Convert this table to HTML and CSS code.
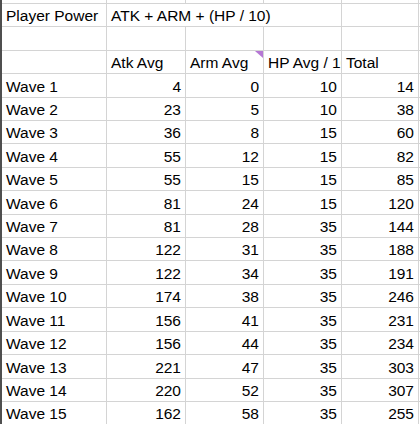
FILE: index.html
```html
<!DOCTYPE html>
<html>
<head>
<meta charset="utf-8">
<link rel="stylesheet" href="styles.css">
</head>
<body>
<div class="sheet">
  <div class="c"></div><div class="c"></div><div class="c"></div><div class="c"></div><div class="c"></div><div class="c"></div>

  <div class="c t">Player Power</div><div class="c t span3">ATK + ARM + (HP / 10)</div><div class="c"></div><div class="c"></div>

  <div class="c"></div><div class="c"></div><div class="c"></div><div class="c"></div><div class="c"></div><div class="c"></div>

  <div class="c"></div><div class="c t">Atk Avg</div><div class="c t note">Arm Avg<span class="tri"></span></div><div class="c t">HP Avg / 10</div><div class="c t">Total</div><div class="c"></div>

  <div class="c t">Wave 1</div><div class="c n">4</div><div class="c n">0</div><div class="c n">10</div><div class="c n">14</div><div class="c"></div>
  <div class="c t">Wave 2</div><div class="c n">23</div><div class="c n">5</div><div class="c n">10</div><div class="c n">38</div><div class="c"></div>
  <div class="c t">Wave 3</div><div class="c n">36</div><div class="c n">8</div><div class="c n">15</div><div class="c n">60</div><div class="c"></div>
  <div class="c t">Wave 4</div><div class="c n">55</div><div class="c n">12</div><div class="c n">15</div><div class="c n">82</div><div class="c"></div>
  <div class="c t">Wave 5</div><div class="c n">55</div><div class="c n">15</div><div class="c n">15</div><div class="c n">85</div><div class="c"></div>
  <div class="c t">Wave 6</div><div class="c n">81</div><div class="c n">24</div><div class="c n">15</div><div class="c n">120</div><div class="c"></div>
  <div class="c t">Wave 7</div><div class="c n">81</div><div class="c n">28</div><div class="c n">35</div><div class="c n">144</div><div class="c"></div>
  <div class="c t">Wave 8</div><div class="c n">122</div><div class="c n">31</div><div class="c n">35</div><div class="c n">188</div><div class="c"></div>
  <div class="c t">Wave 9</div><div class="c n">122</div><div class="c n">34</div><div class="c n">35</div><div class="c n">191</div><div class="c"></div>
  <div class="c t">Wave 10</div><div class="c n">174</div><div class="c n">38</div><div class="c n">35</div><div class="c n">246</div><div class="c"></div>
  <div class="c t">Wave 11</div><div class="c n">156</div><div class="c n">41</div><div class="c n">35</div><div class="c n">231</div><div class="c"></div>
  <div class="c t">Wave 12</div><div class="c n">156</div><div class="c n">44</div><div class="c n">35</div><div class="c n">234</div><div class="c"></div>
  <div class="c t">Wave 13</div><div class="c n">221</div><div class="c n">47</div><div class="c n">35</div><div class="c n">303</div><div class="c"></div>
  <div class="c t">Wave 14</div><div class="c n">220</div><div class="c n">52</div><div class="c n">35</div><div class="c n">307</div><div class="c"></div>
  <div class="c t">Wave 15</div><div class="c n">162</div><div class="c n">58</div><div class="c n">35</div><div class="c n">255</div><div class="c"></div>
</div>
</body>
</html>
```
FILE: styles.css
```css
html, body {
  margin: 0;
  padding: 0;
  background: #ffffff;
}
body {
  width: 420px;
  height: 426px;
  overflow: hidden;
}
.sheet {
  display: grid;
  grid-template-columns: 104px 78px 77px 77px 76px 1fr;
  grid-template-rows: 3px repeat(18, 22.42px);
  gap: 1px;
  background: #d4d4d4;
  border-left: 2px solid #4f4f4f;
  width: 418px;
  font-family: "Liberation Sans", Arial, sans-serif;
  font-size: 15.5px;
  color: #000000;
}
.c {
  background: #ffffff;
  display: flex;
  align-items: flex-end;
  line-height: 18px;
  padding: 0 4px 1px 4px;
  white-space: nowrap;
  overflow: hidden;
  position: relative;
}
.t {
  justify-content: flex-start;
  padding-right: 0;
}
.n {
  justify-content: flex-end;
}
.span3 {
  grid-column: span 3;
}
.tri {
  position: absolute;
  top: 0;
  right: 0;
  width: 0;
  height: 0;
  border-top: 7px solid #b577d4;
  border-left: 8px solid transparent;
}
```
